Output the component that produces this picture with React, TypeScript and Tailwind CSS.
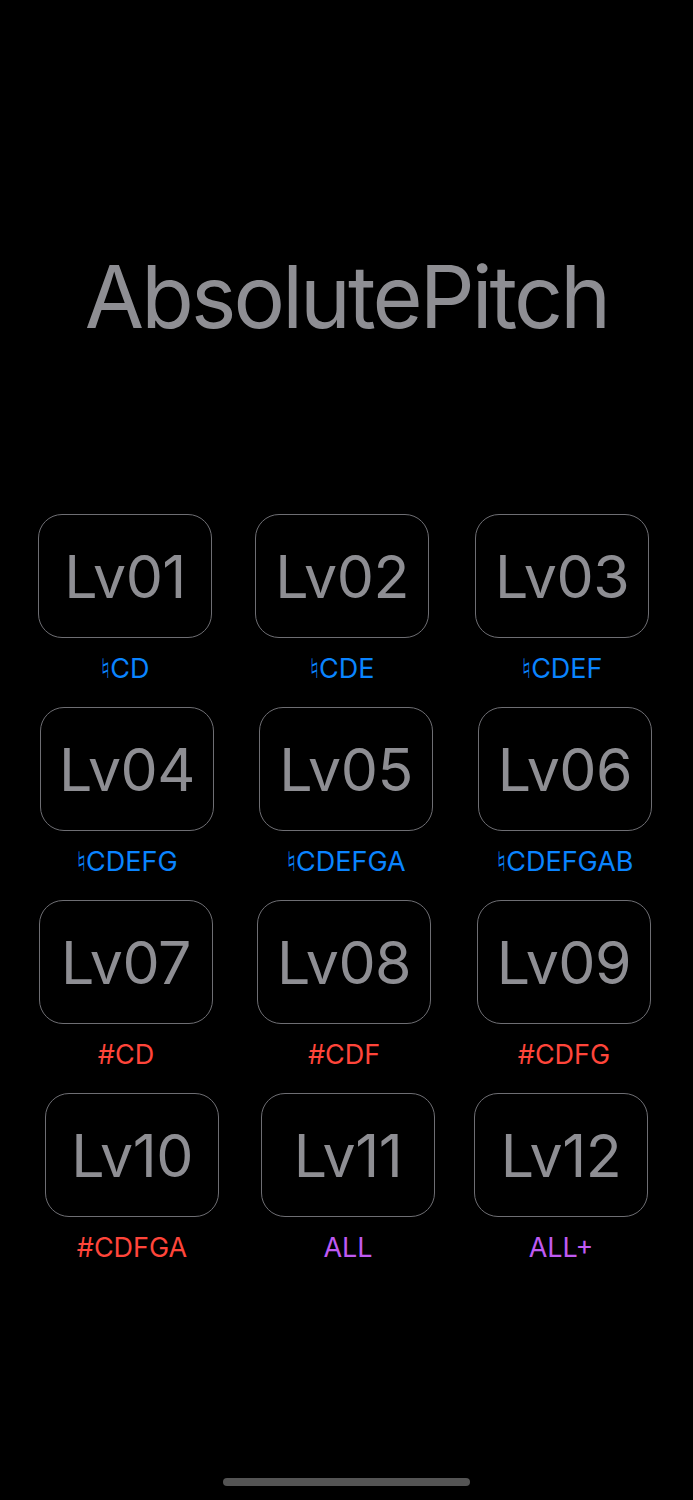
import React from 'react';

type Level = { name: string; notes: string; tone: 'natural' | 'sharp' | 'all' };

const rows: { pad: string; gaps: [string, string]; items: Level[] }[] = [
  {
    pad: 'pl-[38px]',
    gaps: ['ml-[43px]', 'ml-[46px]'],
    items: [
      { name: 'Lv01', notes: '♮CD', tone: 'natural' },
      { name: 'Lv02', notes: '♮CDE', tone: 'natural' },
      { name: 'Lv03', notes: '♮CDEF', tone: 'natural' },
    ],
  },
  {
    pad: 'pl-[40px]',
    gaps: ['ml-[45px]', 'ml-[45px]'],
    items: [
      { name: 'Lv04', notes: '♮CDEFG', tone: 'natural' },
      { name: 'Lv05', notes: '♮CDEFGA', tone: 'natural' },
      { name: 'Lv06', notes: '♮CDEFGAB', tone: 'natural' },
    ],
  },
  {
    pad: 'pl-[39px]',
    gaps: ['ml-[44px]', 'ml-[46px]'],
    items: [
      { name: 'Lv07', notes: '#CD', tone: 'sharp' },
      { name: 'Lv08', notes: '#CDF', tone: 'sharp' },
      { name: 'Lv09', notes: '#CDFG', tone: 'sharp' },
    ],
  },
  {
    pad: 'pl-[45px]',
    gaps: ['ml-[42px]', 'ml-[39px]'],
    items: [
      { name: 'Lv10', notes: '#CDFGA', tone: 'sharp' },
      { name: 'Lv11', notes: 'ALL', tone: 'all' },
      { name: 'Lv12', notes: 'ALL+', tone: 'all' },
    ],
  },
];

const toneClass = {
  natural: 'text-[#0a84ff]',
  sharp: 'text-[#ff453a]',
  all: 'text-[#bf5af2]',
};

const LevelButton: React.FC<{ level: Level; className?: string }> = ({ level, className = '' }) => (
  <div className={`flex flex-col items-center w-[174px] ${className}`}>
    <button className="w-[174px] h-[124px] rounded-[24px] border-[1.5px] border-[#6e6e73] flex items-center justify-center text-[59px] leading-none text-[#8e8e93] tracking-[-0.5px]">
      {level.name}
    </button>
    <div className={`mt-[15px] h-[32px] leading-[32px] text-[27px] whitespace-nowrap ${toneClass[level.tone]}`}>
      {level.notes}
    </div>
  </div>
);

export default function App() {
  return (
    <div className="w-[693px] h-[1500px] bg-black flex flex-col font-['Inter','DejaVu_Sans',sans-serif]">
      <div className="pt-[254px] text-center text-[86px] leading-none text-[#8e8e93] tracking-[-2.9px]">
        AbsolutePitch
      </div>
      <div className="mt-[174px] flex flex-col gap-[22px]">
        {rows.map((row, r) => (
          <div key={r} className={`flex ${row.pad}`}>
            {row.items.map((item, i) => (
              <LevelButton key={item.name} level={item} className={i === 0 ? '' : row.gaps[i - 1]} />
            ))}
          </div>
        ))}
      </div>
      <div className="mt-auto mb-[14px] self-center w-[247px] h-[8px] rounded-full bg-[#545454]" />
    </div>
  );
}
